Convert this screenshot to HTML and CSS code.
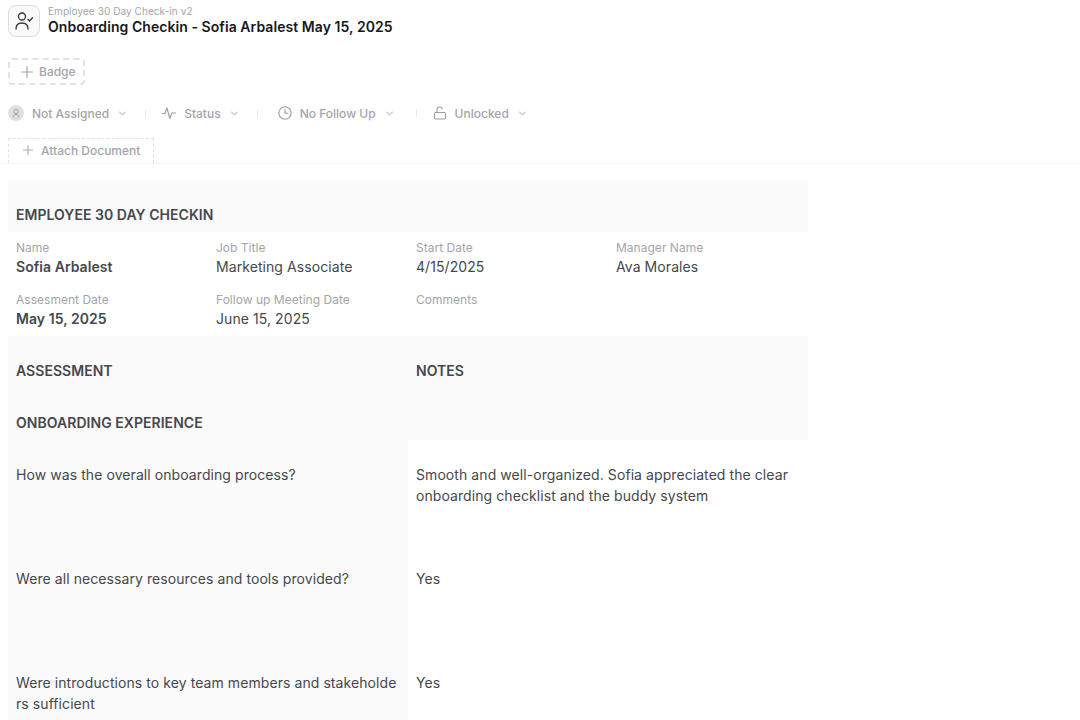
FILE: index.html
```html
<!DOCTYPE html>
<html lang="en">

<head>
  <meta charset="UTF-8">
  <title>Onboarding Checkin - Sofia Arbalest May 15, 2025</title>
  <link rel="stylesheet" href="styles.css">
</head>

<body>
  <header class="doc-header">
    <div class="title-row">
      <div class="doc-icon">
        <svg width="24" height="24" viewBox="0 0 24 24" fill="none" stroke="#333" stroke-width="1.3" stroke-linecap="round" stroke-linejoin="round">
          <circle cx="10" cy="7.500" r="3.500" />
          <path d="M4 20c0-4 2.500-6 6-6s6 2 6 6" />
          <path d="M16 10.500l1.500 1.500 3-3.200" />
        </svg>
      </div>
      <div class="title-text">
        <div class="doc-type">Employee 30 Day Check-in v2</div>
        <h1 class="doc-title">Onboarding Checkin - Sofia Arbalest May 15, 2025</h1>
      </div>
    </div>

    <button class="badge-btn">
      <svg width="14" height="14" viewBox="0 0 14 14" fill="none" stroke="#a3a5ab" stroke-width="1.2" stroke-linecap="round"><path d="M7 1.500v11M1.500 7h11" /></svg>
      Badge
    </button>

    <div class="meta-row">
      <div class="meta-item">
        <span class="avatar">
          <svg width="10" height="10" viewBox="0 0 10 10" fill="none" stroke="#a3a5ab" stroke-width="1"><circle cx="5" cy="3.400" r="2.200" /><path d="M2 9.500c0-2 1.300-3 3-3s3 1 3 3" /></svg>
        </span>
        <span class="meta-label">Not Assigned</span>
        <svg class="chev" width="9" height="9" viewBox="0 0 9 9" fill="none" stroke="#aeb0b5" stroke-width="1" stroke-linecap="round" stroke-linejoin="round"><path d="M1.500 3l3 3 3-3" /></svg>
      </div>
      <span class="meta-sep"></span>
      <div class="meta-item">
        <svg width="14" height="14" viewBox="0 0 14 14" fill="none" stroke="#9a9ca3" stroke-width="1.100" stroke-linecap="round" stroke-linejoin="round"><path d="M0.500 7.500H3L5 2l2.800 10.500L9.800 7h3.700" /></svg>
        <span class="meta-label">Status</span>
        <svg class="chev" width="9" height="9" viewBox="0 0 9 9" fill="none" stroke="#aeb0b5" stroke-width="1" stroke-linecap="round" stroke-linejoin="round"><path d="M1.500 3l3 3 3-3" /></svg>
      </div>
      <span class="meta-sep"></span>
      <div class="meta-item follow-item">
        <svg width="14" height="14" viewBox="0 0 14 14" fill="none" stroke="#9a9ca3" stroke-width="1.100" stroke-linecap="round" stroke-linejoin="round"><circle cx="7" cy="7" r="6.200" /><path d="M7 3.500V7.200h2.800" /></svg>
        <span class="meta-label">No Follow Up</span>
        <svg class="chev" width="9" height="9" viewBox="0 0 9 9" fill="none" stroke="#aeb0b5" stroke-width="1" stroke-linecap="round" stroke-linejoin="round"><path d="M1.500 3l3 3 3-3" /></svg>
      </div>
      <span class="meta-sep"></span>
      <div class="meta-item">
        <svg width="14" height="14" viewBox="0 0 14 14" fill="none" stroke="#9a9ca3" stroke-width="1.100" stroke-linecap="round" stroke-linejoin="round"><rect x="1.500" y="6.500" width="11" height="6.500" rx="1" /><path d="M4 6.500V3.500C4 1.800 5.300 1 6.700 1c1.200 0 2.200.6 2.600 1.700" /></svg>
        <span class="meta-label">Unlocked</span>
        <svg class="chev" width="9" height="9" viewBox="0 0 9 9" fill="none" stroke="#aeb0b5" stroke-width="1" stroke-linecap="round" stroke-linejoin="round"><path d="M1.500 3l3 3 3-3" /></svg>
      </div>
    </div>

    <button class="attach-btn">
      <svg width="10" height="10" viewBox="0 0 10 10" fill="none" stroke="#a8aab0" stroke-width="1.100" stroke-linecap="round"><path d="M5 .5v9M.5 5h9" /></svg>
      Attach Document
    </button>
  </header>

  <main class="sheet">
    <div class="cell head span-4"><b>EMPLOYEE 30 DAY CHECKIN</b></div>

    <div class="cell field"><span class="field-name">Name</span><b>Sofia Arbalest</b></div>
    <div class="cell field"><span class="field-name">Job Title</span>Marketing Associate</div>
    <div class="cell field"><span class="field-name">Start Date</span>4/15/2025</div>
    <div class="cell field"><span class="field-name">Manager Name</span>Ava Morales</div>

    <div class="cell field"><span class="field-name">Assesment Date</span><b>May 15, 2025</b></div>
    <div class="cell field"><span class="field-name">Follow up Meeting Date</span>June 15, 2025</div>
    <div class="cell field"><span class="field-name">Comments</span></div>
    <div class="cell field"></div>

    <div class="cell head span-2"><b>ASSESSMENT</b></div>
    <div class="cell head span-2"><b>NOTES</b></div>

    <div class="cell head span-2"><b>ONBOARDING EXPERIENCE</b></div>
    <div class="cell head span-2"></div>

    <div class="cell question span-2">How was the overall onboarding process?</div>
    <div class="cell answer span-2">Smooth and well-organized. Sofia appreciated the clear onboarding checklist and the buddy system</div>

    <div class="cell question span-2">Were all necessary resources and tools provided?</div>
    <div class="cell answer span-2">Yes</div>

    <div class="cell question span-2">Were introductions to key team members and stakeholders sufficient</div>
    <div class="cell answer span-2">Yes</div>
  </main>
</body>

</html>
```

FILE: styles.css
```css
* {
  box-sizing: border-box;
}

html,
body {
  height: 720px;
  overflow: hidden;
}

body {
  margin: 0;
  background-color: #fff;
  color: #46474d;
  font-family: 'Inter', 'Liberation Sans', sans-serif;
}

.doc-header {
  padding: 4px 8px 0;
  height: 164px;
  border-bottom: 1px solid #f3f3f4;
}

.title-row {
  display: flex;
  align-items: flex-start;
  gap: 8px;
}

.doc-icon {
  width: 32px;
  height: 32px;
  margin-top: 1px;
  display: flex;
  align-items: center;
  justify-content: center;
  border: 1px solid #dcdcdf;
  border-radius: 8px;
  background-color: #fafafa;
}

.doc-type {
  font-size: 10px;
  line-height: 14px;
  letter-spacing: 0.07px;
  color: #a3a5ab;
}

.doc-title {
  margin: 0;
  font-size: 14px;
  line-height: 18px;
  font-weight: 600;
  letter-spacing: 0.06px;
  color: #18181b;
}

.badge-btn {
  margin-top: 21px;
  width: 77px;
  height: 27px;
  display: flex;
  align-items: center;
  gap: 5px;
  padding: 0 0 0 10px;
  border: 2px dashed #e2e2e4;
  border-radius: 4px;
  background: none;
  color: #a3a5ab;
  font: 500 12px 'Inter', sans-serif;
}

.meta-row {
  margin-top: 20px;
  height: 16px;
  display: flex;
  align-items: center;
}

.meta-item {
  display: flex;
  align-items: center;
  gap: 8px;
}

.follow-item {
  margin: 0 4px;
}

.meta-label {
  font-size: 12px;
  font-weight: 500;
  color: #a3a5ab;
}

.chev {
  margin-left: 1px;
}

.meta-sep {
  width: 1px;
  height: 8px;
  margin: 0 16px 0 18px;
  background-color: #e8e8ea;
}

.avatar {
  width: 16px;
  height: 16px;
  display: flex;
  align-items: center;
  justify-content: center;
  border-radius: 50%;
  background-color: #e0e0e2;
}

.attach-btn {
  margin-top: 17px;
  width: 146px;
  height: 25px;
  display: flex;
  align-items: center;
  gap: 8px;
  padding: 0 0 2px 14px;
  border: 1px dashed #e2e2e4;
  border-bottom: 0;
  background: none;
  color: #a3a5ab;
  font: 500 12px 'Inter', sans-serif;
}

.sheet {
  margin: 16px 0 0 8px;
  width: 800px;
  display: grid;
  grid-template-columns: repeat(4, 200px);
  grid-auto-rows: 52px;
  font-size: 14px;
  line-height: 21px;
  letter-spacing: 0.075px;
}

.cell {
  padding: 0 8px;
}

.cell b {
  font-weight: 600;
  letter-spacing: 0.045px;
}

.span-2 {
  grid-column: span 2;
}

.span-4 {
  grid-column: span 4;
}

.head {
  display: flex;
  align-items: flex-end;
  padding-bottom: 7px;
  background-color: #fafafa;
}

.field {
  padding-top: 8px;
}

.field-name {
  display: block;
  font-size: 12px;
  line-height: 15px;
  margin-bottom: 1px;
  letter-spacing: 0.02px;
  color: #a3a5ab;
}

.question,
.answer {
  grid-row: span 2;
  padding-top: 24px;
}

.question {
  word-break: break-all;
  background-color: #fafafa;
}
```
